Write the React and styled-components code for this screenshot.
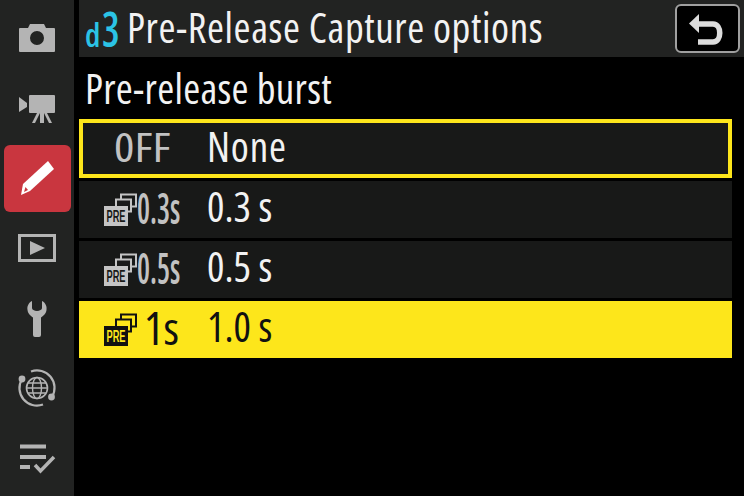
import styled, { createGlobalStyle } from 'styled-components'

const GlobalStyle = createGlobalStyle`
  html, body {
    margin: 0;
    padding: 0;
    background: #000;
  }
  body {
    font-family: "Open Sans", "Noto Sans", sans-serif;
    font-weight: 500;
    line-height: 1.4;
  }
`

const Screen = styled.div`
  display: flex;
  width: 744px;
  height: 496px;
  overflow: hidden;
  background: #000;
`

const Sidebar = styled.nav`
  display: flex;
  flex-direction: column;
  flex: none;
  width: 74px;
  padding-top: 3px;
  box-sizing: border-box;
  background: #222322;
`

const NavItem = styled.div`
  display: flex;
  align-items: center;
  justify-content: center;
  height: 70px;
  color: #b4b4b4;
`

const ActiveTab = styled.div`
  display: flex;
  align-items: center;
  justify-content: center;
  width: 67px;
  height: 67px;
  border-radius: 6px;
  background: #c9363f;
  color: #fff;
`

const Main = styled.main`
  display: flex;
  flex-direction: column;
  flex: 1;
  margin-left: 5px;
`

const Header = styled.header`
  display: flex;
  align-items: center;
  justify-content: space-between;
  height: 57px;
  padding: 0 4px 0 6px;
  background: #222322;
`

const TitleGroup = styled.div`
  display: flex;
  align-items: center;
`

const Code = styled.span`
  display: flex;
  align-items: baseline;
  width: 42px;
  font-size: 49px;
  font-weight: 600;
  color: #2bc3e6;
`

const CodeLetter = styled.span`
  display: inline-block;
  width: 17px;
  font-size: 32px;
  font-stretch: 75%;
`

const CodeDigit = styled.span`
  display: inline-block;
  font-stretch: 75%;
  transform: scaleX(0.8);
  transform-origin: left;
`

const Narrow = styled.span`
  display: inline-block;
  white-space: nowrap;
  font-stretch: 75%;
  letter-spacing: ${(p) => p.$track || 0}px;
`

const Title = styled.h1`
  margin: 0 0 2px;
  font-size: 41px;
  font-weight: 500;
  color: #f2f2f2;
`

const BackButton = styled.button`
  display: flex;
  align-items: center;
  justify-content: center;
  width: 65px;
  height: 49px;
  padding: 0;
  border: 2px solid #a0a0a0;
  border-radius: 6px;
  background: #000;
  box-sizing: border-box;
`

const SubTitle = styled.h2`
  height: 62px;
  margin: 0;
  padding-left: 6px;
  font-size: 41px;
  font-weight: 500;
  line-height: 62px;
  color: #f2f2f2;
`

const List = styled.div`
  display: flex;
  flex-direction: column;
  gap: 3px;
  width: 653px;
`

const Row = styled.div`
  display: flex;
  align-items: center;
  height: ${(p) => (p.$focused ? 59 : 57)}px;
  box-sizing: border-box;
  background: ${(p) => (p.$selected ? '#fde61b' : '#181918')};
  border: ${(p) => (p.$focused ? '4px solid #fde61b' : 'none')};
  padding-left: ${(p) => (p.$focused ? 0 : 4)}px;
  color: ${(p) => (p.$selected ? '#111' : '#f2f2f2')};
`

const LabelCell = styled.div`
  display: flex;
  align-items: center;
  flex: none;
  width: 124px;
  padding-left: 21px;
  box-sizing: border-box;
  font-size: 40px;
  color: ${(p) => (p.$selected ? '#111' : '#c2c2c2')};
`

const OffLabel = styled.span`
  display: block;
  margin: 0 0 3px 10px;
  transform: scaleX(1.2);
  transform-origin: left;
`

const TimeLabel = styled.span`
  display: block;
  font-size: ${(p) => (p.$big ? 46 : 44)}px;
  font-weight: ${(p) => (p.$big ? 500 : 600)};
  line-height: 56px;
  margin: 0 0 6px ${(p) => (p.$big ? 7 : 0)}px;
  letter-spacing: ${(p) => (p.$big ? 0 : -1)}px;
  transform: scaleX(${(p) => (p.$big ? 1 : 0.66)});
  transform-origin: left;
`

const Value = styled.span`
  margin-bottom: ${(p) => (p.$focused ? 3 : 5)}px;
  font-size: 41px;
`

const CameraIcon = () => (
  <svg width="40" height="40" viewBox="0 0 40 40" fill="currentColor">
    <path
      fillRule="evenodd"
      d="M13 6 h14 l2 4 h8 a1 1 0 0 1 1 1 v22 a1 1 0 0 1 -1 1 H3 a1 1 0 0 1 -1 -1 V11 a1 1 0 0 1 1 -1 h8 z M20 13 a7 7 0 1 0 0 14 a7 7 0 1 0 0 -14 z"
    />
  </svg>
)

const MovieIcon = () => (
  <svg width="40" height="40" viewBox="0 0 40 40" fill="currentColor">
    <path d="M2 9 L10 15 V19 L2 24 z" />
    <rect x="12" y="7" width="26" height="18" rx="1" />
    <path d="M23 25 h4 v10 h-4 z" />
    <path d="M20 25 h3 l-5 10 h-3 z" />
    <path d="M27 25 h3 l5 10 h-3 z" />
  </svg>
)

const PencilIcon = () => (
  <svg width="40" height="40" viewBox="0 0 40 40" fill="currentColor">
    <path d="M31 3 L37 11 L13 33 L4 37 L6 26 z" />
    <path d="M7 34 L8.5 29 L11 32 z" fill="#c9363f" />
  </svg>
)

const PlayIcon = () => (
  <svg width="40" height="40" viewBox="0 0 40 40" fill="none">
    <rect x="2.500" y="7.500" width="35" height="25" stroke="currentColor" strokeWidth="3" />
    <path d="M13 13 L28 20 L13 27 z" fill="currentColor" />
  </svg>
)

const WrenchIcon = () => (
  <svg width="40" height="40" viewBox="0 0 40 40" fill="currentColor">
    <path d="M15 3 V10 a5 3 0 0 0 10 0 V3 C29 5 30 9 29.500 12 C29 16 26 18 24 19.500 V37 a2 2 0 0 1 -2 2 h-4 a2 2 0 0 1 -2 -2 V19.500 C14 18 11 16 10.500 12 C10 9 11 5 15 3 z" />
  </svg>
)

const GlobeIcon = () => (
  <svg width="40" height="40" viewBox="0 0 40 40" fill="none" stroke="currentColor">
    <circle cx="20" cy="20" r="10.500" strokeWidth="1.600" />
    <ellipse cx="20" cy="20" rx="4.500" ry="10.500" strokeWidth="1.400" />
    <path d="M9.500 20 H30.500 M11 15 H29 M11 25 H29" strokeWidth="1.400" />
    <path d="M5 11 A17.500 17.500 0 0 0 26 36.500" strokeWidth="2.200" />
    <path d="M35 29 A17.500 17.500 0 0 0 14 3.500" strokeWidth="2.200" />
    <circle cx="5" cy="11" r="3.400" fill="currentColor" stroke="none" />
    <circle cx="34.500" cy="29" r="3.400" fill="currentColor" stroke="none" />
  </svg>
)

const ChecklistIcon = () => (
  <svg width="40" height="40" viewBox="0 0 40 40" fill="none" stroke="currentColor" strokeWidth="4">
    <path d="M3 8.500 H29 M3 19 H29 M3 29 H13" />
    <path d="M18 27 L23.500 33 L37 19" strokeWidth="3.500" />
  </svg>
)

const BackIcon = () => (
  <svg width="40" height="38" viewBox="0 0 40 38" fill="none">
    <path d="M10 14 H25 C34 14 34 32 25 32 H10" stroke="#dcdcdc" strokeWidth="5.500" />
    <path d="M1 13.500 L11 4 V23 z" fill="#dcdcdc" />
  </svg>
)

// stacked frames with the PRE tag in front
const PreIcon = ({ fg, bg }) => (
  <svg width="33" height="34" viewBox="0 0 33 34">
    <rect x="17" y="1.500" width="15" height="12" fill={bg} stroke={fg} strokeWidth="2" />
    <rect x="12" y="6.500" width="15" height="12" fill={bg} stroke={fg} strokeWidth="2" />
    <rect x="0" y="13" width="24" height="20" fill={fg} />
    <text
      x="12"
      y="29"
      textAnchor="middle"
      fontFamily='"Liberation Sans", sans-serif'
      fontWeight="700"
      fontSize="16"
      textLength="19"
      lengthAdjust="spacingAndGlyphs"
      fill={bg}
    >
      PRE
    </text>
  </svg>
)

const navItems = [CameraIcon, MovieIcon, PencilIcon, PlayIcon, WrenchIcon, GlobeIcon, ChecklistIcon]

const App = () => {
  return (
    <>
      <GlobalStyle />
      <Screen>
        <Sidebar>
          {navItems.map((Icon, i) => (
            <NavItem key={i}>
              {i === 2 ? (
                <ActiveTab>
                  <Icon />
                </ActiveTab>
              ) : (
                <Icon />
              )}
            </NavItem>
          ))}
        </Sidebar>
        <Main>
          <Header>
            <TitleGroup>
              <Code>
                <CodeLetter>d</CodeLetter>
                <CodeDigit>3</CodeDigit>
              </Code>
              <Title>
                <Narrow $track={0.6}>Pre-Release Capture options</Narrow>
              </Title>
            </TitleGroup>
            <BackButton aria-label="Back">
              <BackIcon />
            </BackButton>
          </Header>
          <SubTitle>
            <Narrow $track={0.3}>Pre-release burst</Narrow>
          </SubTitle>
          <List>
            <Row $focused>
              <LabelCell>
                <OffLabel>
                  <Narrow>0FF</Narrow>
                </OffLabel>
              </LabelCell>
              <Value $focused>
                <Narrow $track={0.8}>None</Narrow>
              </Value>
            </Row>
            <Row>
              <LabelCell>
                <PreIcon fg="#c4c4c4" bg="#181918" />
                <TimeLabel>
                  <Narrow>0.3s</Narrow>
                </TimeLabel>
              </LabelCell>
              <Value>
                <Narrow>0.3 s</Narrow>
              </Value>
            </Row>
            <Row>
              <LabelCell>
                <PreIcon fg="#c4c4c4" bg="#181918" />
                <TimeLabel>
                  <Narrow>0.5s</Narrow>
                </TimeLabel>
              </LabelCell>
              <Value>
                <Narrow>0.5 s</Narrow>
              </Value>
            </Row>
            <Row $selected>
              <LabelCell $selected>
                <PreIcon fg="#111" bg="#fde61b" />
                <TimeLabel $big>
                  <Narrow>1s</Narrow>
                </TimeLabel>
              </LabelCell>
              <Value>
                <Narrow>1.0 s</Narrow>
              </Value>
            </Row>
          </List>
        </Main>
      </Screen>
    </>
  )
}

export default App
